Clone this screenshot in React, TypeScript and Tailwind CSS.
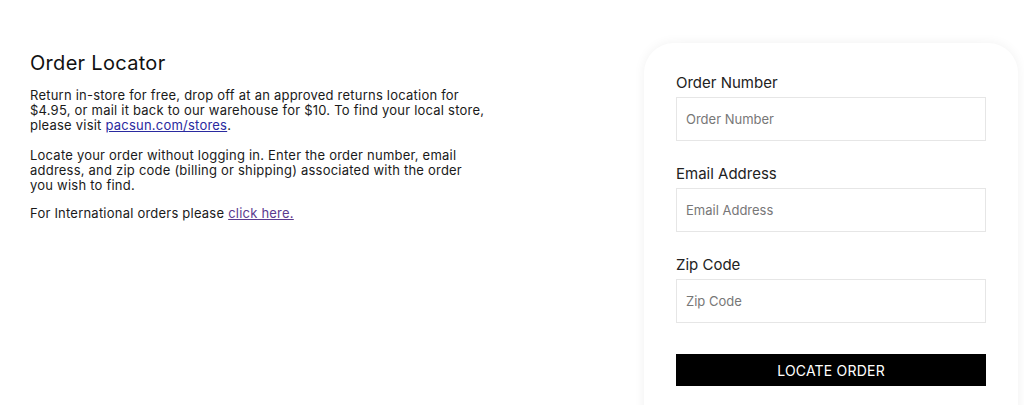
const font = { fontFamily: '"Inter", "Noto Sans", sans-serif' }

function Field({ label }: { label: string }) {
  return (
    <div className="mb-[22px]">
      <label className="block text-[15px] leading-[22px] text-[#222] mb-[3px]">{label}</label>
      <input
        placeholder={label}
        className="block w-full h-[44px] border border-[#e6e6e6] bg-white px-[9px] text-[13px] text-[#222] placeholder:text-[#777] outline-none"
      />
    </div>
  )
}

export default function App() {
  return (
    <div className="w-[1024px] h-[405px] overflow-hidden bg-white" style={font}>
      <div className="flex pl-[30px] pr-[6px] pt-[43px]">
        <div className="w-[480px] pt-[7px] text-[13px] leading-[15px] tracking-[0.22px] text-[#1a1a1a] whitespace-nowrap">
          <h1 className="text-[20px] leading-[26px] tracking-[0.3px] mb-[12px] text-[#111]">Order Locator</h1>
          <p className="mb-[15px]">
            Return in-store for free, drop off at an approved returns location for
            <br />
            $4.95, or mail it back to our warehouse for $10. To find your local store,
            <br />
            please visit <a href="#" className="underline text-[#2a2aa0]">pacsun.com/stores</a>.
          </p>
          <p className="mb-[13px]">
            Locate your order without logging in. Enter the order number, email
            <br />
            address, and zip code (billing or shipping) associated with the order
            <br />
            you wish to find.
          </p>
          <p>
            For International orders please{' '}
            <a href="#" className="underline text-[#5b3a8f]">click here.</a>
          </p>
        </div>
        <div className="ml-auto w-[374px] h-[400px] rounded-[30px] bg-white shadow-[0_0_12px_rgba(0,0,0,0.06)] px-[32px] pt-[29px]">
          <Field label="Order Number" />
          <Field label="Email Address" />
          <Field label="Zip Code" />
          <button className="mt-[9px] w-full h-[32px] bg-black text-white text-[14px] tracking-[0.2px]">
            LOCATE ORDER
          </button>
        </div>
      </div>
    </div>
  )
}
